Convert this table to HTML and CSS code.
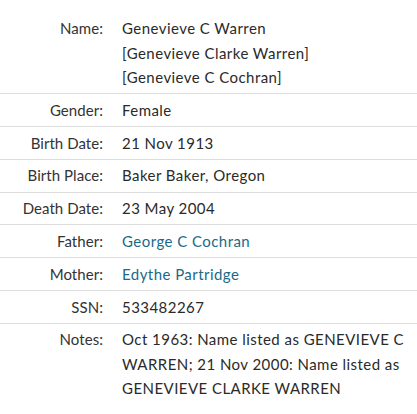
FILE: index.html
```html
<!DOCTYPE html>
<html>
<head>
<meta charset="utf-8">
<link rel="stylesheet" href="styles.css">
</head>
<body>
<div class="record">
  <div class="row"><div class="label">Name:</div><div class="value">Genevieve C Warren<br>[Genevieve Clarke Warren]<br>[Genevieve C Cochran]</div></div>
  <div class="row"><div class="label">Gender:</div><div class="value">Female</div></div>
  <div class="row"><div class="label">Birth Date:</div><div class="value">21 Nov 1913</div></div>
  <div class="row"><div class="label">Birth Place:</div><div class="value">Baker Baker, Oregon</div></div>
  <div class="row"><div class="label">Death Date:</div><div class="value">23 May 2004</div></div>
  <div class="row"><div class="label">Father:</div><div class="value"><a href="#">George C Cochran</a></div></div>
  <div class="row"><div class="label">Mother:</div><div class="value"><a href="#">Edythe Partridge</a></div></div>
  <div class="row"><div class="label">SSN:</div><div class="value">533482267</div></div>
  <div class="row last"><div class="label">Notes:</div><div class="value">Oct 1963: Name listed as GENEVIEVE C WARREN; 21 Nov 2000: Name listed as GENEVIEVE CLARKE WARREN</div></div>
</div>
</body>
</html>
```

FILE: styles.css
```css
html, body {
  margin: 0;
  padding: 0;
  background: #fff;
}
.record {
  padding-top: 12.5px;
  font-family: Lato, "Noto Sans", sans-serif;
  color: #333;
  width: 417px;
}
.row {
  display: flex;
  border-bottom: 1px solid #ddd;
  padding: 3.65px 0;
  line-height: 24.5px;
}
.row.last {
  border-bottom: none;
}
.label {
  width: 103px;
  flex: none;
  text-align: right;
  font-size: 15px;
  letter-spacing: 0.05px;
  color: #333;
}
.value {
  flex: 1;
  padding-left: 19px;
  padding-right: 8px;
  font-size: 15px;
  letter-spacing: 0.45px;
  color: #2a2a2a;
}
.value a {
  color: #1a6a8a;
  text-decoration: none;
}
```
